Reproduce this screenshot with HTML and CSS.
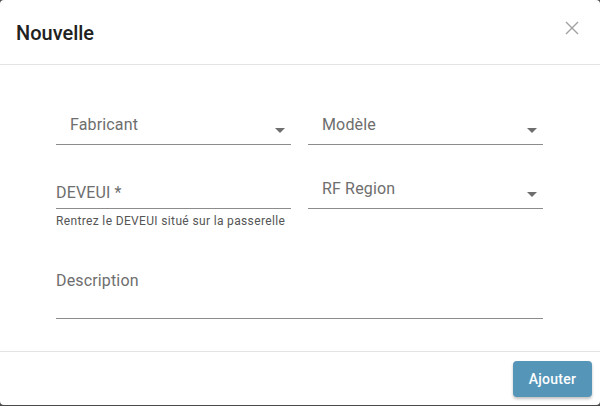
FILE: index.html
```html
<!DOCTYPE html>
<html lang="fr">
<head>
<meta charset="utf-8">
<title>Nouvelle</title>
<link rel="stylesheet" href="styles.css">
</head>
<body>
<div class="modal">
  <div class="modal-header">
    <h2 class="modal-title">Nouvelle</h2>
    <button class="close-btn" aria-label="Fermer">
      <svg width="14" height="14" viewBox="0 0 14 14"><path d="M1 1L13 13M13 1L1 13" stroke="#a0a0a0" stroke-width="1.4" fill="none"/></svg>
    </button>
  </div>
  <div class="modal-body">
    <div class="row">
      <div class="field select">
        <span class="value">Fabricant</span>
        <span class="caret"></span>
      </div>
      <div class="field select">
        <span class="value">Modèle</span>
        <span class="caret"></span>
      </div>
    </div>
    <div class="row row-second">
      <div class="col">
        <div class="field input">
          <span class="value">DEVEUI *</span>
        </div>
        <div class="helper">Rentrez le DEVEUI situé sur la passerelle</div>
      </div>
      <div class="col">
        <div class="field select">
          <span class="value">RF Region</span>
          <span class="caret"></span>
        </div>
      </div>
    </div>
    <div class="field textarea">
      <span class="value">Description</span>
    </div>
  </div>
  <div class="modal-footer">
    <button class="btn-primary">Ajouter</button>
  </div>
</div>
</body>
</html>
```

FILE: styles.css
```css
html, body {
  margin: 0;
  padding: 0;
}
body {
  background: #4a4a4a;
  width: 600px;
  height: 406px;
  font-family: Roboto, "Liberation Sans", Arial, sans-serif;
}
.modal {
  width: 600px;
  height: 405px;
  background: #ffffff;
  border-radius: 4px;
  display: flex;
  flex-direction: column;
  box-sizing: border-box;
}
.modal-header {
  height: 64px;
  border-bottom: 1px solid #e3e3e3;
  display: flex;
  align-items: center;
  justify-content: space-between;
  padding: 0 16px 0 16px;
  flex-shrink: 0;
}
.modal-title {
  margin: 0;
  font-size: 20px;
  font-weight: 500;
  color: #212121;
  padding-top: 1px;
}
.close-btn {
  background: none;
  border: 0;
  padding: 0;
  margin-right: 5px;
  width: 14px;
  height: 14px;
  display: flex;
  margin-top: -8px;
}
.modal-body {
  flex: 1;
  padding: 39px 57px 0 56px;
}
.row {
  display: grid;
  grid-template-columns: 235px 235px;
  column-gap: 17px;
}
.row-second {
  margin-top: 23px;
}
.field {
  position: relative;
  border-bottom: 1px solid #8c8c8c;
  box-sizing: border-box;
  display: flex;
  align-items: center;
  font-size: 16px;
  color: #6e6e6e;
  letter-spacing: 0.15px;
}
.field.select {
  height: 41px;
  padding: 2px 14px 0 14px;
}
.field.input {
  height: 41px;
  padding: 10px 0 0 0;
}
.value {
  line-height: 20px;
}
.caret {
  position: absolute;
  right: 6px;
  top: 24px;
  width: 0;
  height: 0;
  border-left: 5px solid transparent;
  border-right: 5px solid transparent;
  border-top: 5px solid #6e6e6e;
}
.helper {
  margin-top: 5px;
  font-size: 12px;
  line-height: 14px;
  color: #555555;
  letter-spacing: 0.35px;
}
.field.textarea {
  margin-top: 32px;
  height: 59px;
  align-items: flex-start;
  padding-top: 11px;
}
.modal-footer {
  height: 54px;
  border-top: 1px solid #e3e3e3;
  box-sizing: border-box;
  display: flex;
  justify-content: flex-end;
  align-items: center;
  padding: 1px 8px 0 0;
  flex-shrink: 0;
}
.btn-primary {
  width: 79px;
  height: 36px;
  background: #5595b8;
  color: #ffffff;
  border: 0;
  border-radius: 4px;
  font-family: Roboto, "Liberation Sans", Arial, sans-serif;
  font-size: 14px;
  font-weight: 500;
  letter-spacing: 0.3px;
  box-shadow: 0 2px 3px rgba(0, 0, 0, 0.25);
}
```
